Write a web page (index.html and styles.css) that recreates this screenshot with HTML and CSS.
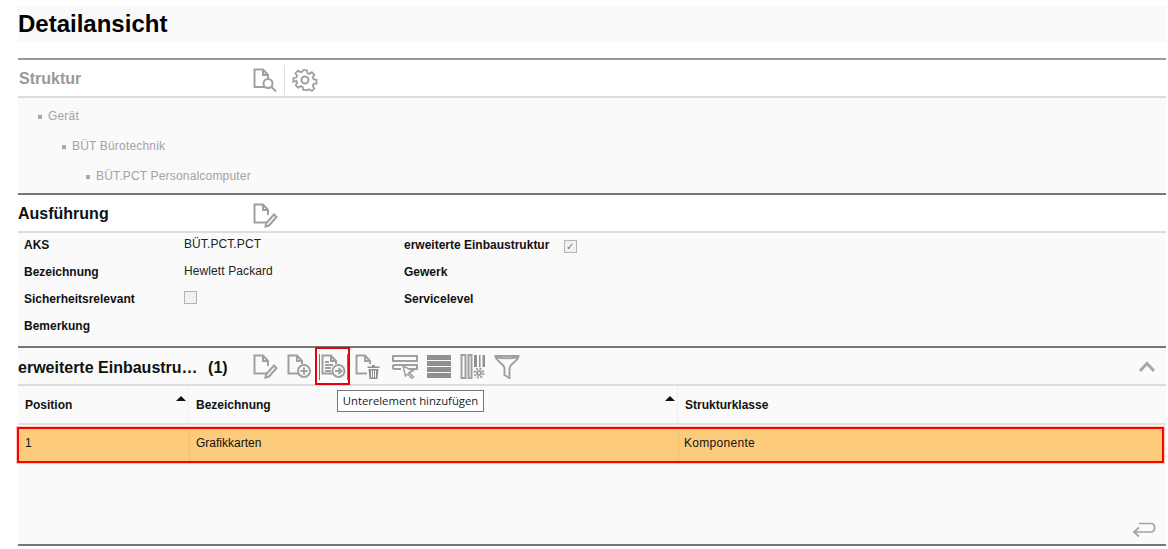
FILE: index.html
```html
<!DOCTYPE html>
<html lang="de">
<head>
<meta charset="utf-8">
<title>Detailansicht</title>
<link rel="stylesheet" href="styles.css">
</head>
<body>
<main class="page">
  <h1 class="title">Detailansicht</h1>

  <section class="panel first">
    <header class="head white">
      <h2 class="head-title muted">Struktur</h2>
      <div class="tools">
        <svg class="icon" viewBox="0 0 26 26"><path d="M13 20H2.500V2.500H11L16 8V11M11 2.500V8H16"/><circle cx="16" cy="16.500" r="4.500"/><path d="M19.500 20L24 24.500"/></svg>
        <span class="sep"></span>
        <svg class="icon gear" viewBox="0 0 26 26"><circle cx="13" cy="13" r="3.500"/><path d="M11 2h4l.7 3.300 2 .9 2.900-1.800 2.800 2.800-1.800 2.900.9 2 3.300.7v4l-3.300.7-.9 2 1.800 2.900-2.800 2.800-2.900-1.800-2 .9L15 24h-4l-.7-3.300-2-.9-2.900 1.800-2.800-2.800 1.800-2.900-.9-2L0 15v-4l3.300-.7.9-2-1.800-2.900 2.800-2.800 2.900 1.800 2-.9z" transform="translate(1.300 1.300) scale(.9)"/></svg>
      </div>
    </header>
    <ul class="tree">
      <li class="l1">Gerät</li>
      <li class="l2">BÜT Bürotechnik</li>
      <li class="l3">BÜT.PCT Personalcomputer</li>
    </ul>
  </section>

  <section class="panel dark">
    <header class="head white">
      <h2 class="head-title">Ausführung</h2>
      <div class="tools">
        <svg class="icon" viewBox="0 0 26 26"><path d="M15 20.500H2.500V2.500H11L16 8V13M11 2.500V8H16"/><path class="thick" d="M14 21.500L22 12.500 24.500 15 17 23.500 13.500 24.500z"/></svg>
      </div>
    </header>
    <div class="form">
      <b class="lbl">AKS</b><span class="val">BÜT.PCT.PCT</span><b class="lbl">erweiterte Einbaustruktur <span class="check on">✓</span></b>
      <b class="lbl">Bezeichnung</b><span class="val">Hewlett Packard</span><b class="lbl">Gewerk</b>
      <b class="lbl">Sicherheitsrelevant</b><span class="val"><span class="check"></span></span><b class="lbl">Servicelevel</b>
      <b class="lbl">Bemerkung</b><span></span><span></span>
    </div>
  </section>

  <section class="panel dark">
    <header class="head">
      <h2 class="head-title sub">erweiterte Einbaustru… <span class="count">(1)</span></h2>
      <div class="tools">
        <svg class="icon" viewBox="0 0 26 26"><path d="M15 20.500H2.500V2.500H11L16 8V13M11 2.500V8H16"/><path class="thick" d="M14 21.500L22 12.500 24.500 15 17 23.500 13.500 24.500z"/></svg>
        <svg class="icon" viewBox="0 0 26 26"><path d="M13 20.500H2.500V2.500H11L16 8V11M11 2.500V8H16"/><circle cx="18" cy="18" r="6"/><path d="M18 14.500V21.500M14.500 18H21.500"/></svg>
        <span class="active">
          <svg class="icon" viewBox="0 0 26 26"><path d="M13 20.500H2.500V2.500H11L16 8V11M11 2.500V8H16M5 9H9M5 12H13M5 15H11M5 18H11"/><circle cx="18.500" cy="18" r="6"/><path d="M15 18H21.500M18.500 15L21.500 18 18.500 21"/></svg>
        </span>
        <svg class="icon" viewBox="0 0 26 26"><path d="M13 20.500H2.500V2.500H11L16 8V11M11 2.500V8H16"/><path class="fill" d="M13.500 13.500H25.500V15H13.500zM18 12H21V13.500H18z"/><path class="fill" d="M14.500 16H24.500L23.500 26H15.500zM17 17.500V24.500H18V17.500zM19 17.500V24.500H20V17.500zM21 17.500V24.500H22V17.500z" fill-rule="evenodd"/></svg>
        <svg class="icon first-wide" viewBox="0 0 26 26"><path d="M1 3H25V8H1zM1 12H25V16H15"/><path d="M1 16V12"/><path d="M1 16H9"/><path class="blank" d="M11 13L21 18 17 19.500 21.500 24 19.500 25 16 21 13.500 23z"/></svg>
        <svg class="icon" viewBox="0 0 26 26"><path class="fill" d="M1 2H25V7H1zM1 8H25V13H1zM1 14H25V19H1zM1 20H25V25H1z"/></svg>
        <svg class="icon" viewBox="0 0 26 26"><path d="M1.500 2V25H5.500V2zM8.500 2V25H11.500V2z"/><path class="fill" d="M14 2H17V14H14zM19 2H20.500V14H19zM22.500 2H25V14H22.500z"/><circle cx="19" cy="20" r="2"/><circle class="teeth" cx="19" cy="20" r="4.500"/></svg>
        <svg class="icon" viewBox="0 0 26 26"><path d="M1.500 3H24.500C24.500 8 15.500 11 15.500 15V25L10.500 22V15C10.500 11 1.500 8 1.500 3zM1.500 3C1.500 6 24.500 6 24.500 3"/></svg>
      </div>
      <svg class="chevron" viewBox="0 0 18 12"><path d="M2 11L9 3.500 16 11"/></svg>
      <div class="tooltip">Unterelement hinzufügen</div>
    </header>
    <div class="table">
      <div class="thead">
        <b class="cell c1">Position<i class="sort"></i></b>
        <b class="cell c2">Bezeichnung<i class="sort"></i></b>
        <b class="cell c3">Strukturklasse</b>
      </div>
      <div class="row">
        <span class="cell c1">1</span>
        <span class="cell c2">Grafikkarten</span>
        <span class="cell c3">Komponente</span>
      </div>
      <div class="foot">
        <svg class="back" viewBox="0 0 24 18"><path d="M7 3.500H18.500C24 3.500 24 12 18.500 12H2M7 7.500L2 12 7 16.500"/></svg>
      </div>
    </div>
  </section>
</main>
</body>
</html>
```

FILE: styles.css
```css
* { box-sizing: border-box; }
html, body { margin: 0; padding: 0; height: 549px; overflow: hidden; background: #fff; }
body { font: 12px "Liberation Sans", Arial, sans-serif; color: #111; }
.page { margin-left: 18px; width: 1148px; padding-top: 6px; }
.title {
  margin: 0; height: 36px; padding-top: 3px; background: #f9f9f9;
  font-size: 24px; line-height: 30px; font-weight: bold; color: #000;
}
.panel { border-top: 2px solid #777; }
.panel.first { margin-top: 16px; border-top-color: #999; }
.head {
  position: relative; display: flex; align-items: center; height: 38px;
  border-bottom: 2px solid #ddd; background: #fafafa;
}
.head.white { background: #fff; }
.head.white .tools { padding-top: 3px; }
.head-title { margin: 0; width: 234px; padding-top: 2px; font-size: 16px; font-weight: bold; color: #111; white-space: nowrap; }
.head-title.muted { color: #999; padding-left: 1px; }
.head-title.sub { font-size: 16px; padding-top: 4px; }
.count { margin-left: 6px; }
.tools { display: flex; align-items: center; gap: 8px; height: 36px; }
.icon { width: 26px; height: 26px; flex: none; fill: none; stroke: #a0a0a0; stroke-width: 2; }
.icon .fill { fill: #8f8f8f; stroke: none; }
.icon .blank { fill: #fff; stroke-width: 1.500; }
.icon .teeth { stroke-width: 2; stroke-dasharray: 2 1.530; }
.first-wide { margin-left: 4px; }
.sep { width: 1px; height: 30px; background: #ddd; margin: 0 -1px 0 -2px; }
.active {
  display: flex; align-items: center; justify-content: center; width: 35px; height: 38px;
  margin: 0 -4px 0 -5px; border: 2px solid #e8000b;
  background: linear-gradient(#777, #777) 2px 5px / 1px 26px no-repeat, linear-gradient(#777, #777) 30px 5px / 1px 26px no-repeat;
}
.chevron {
  position: absolute; right: 10px; top: 12px; width: 18px; height: 12px;
  fill: none; stroke: #a8a8a8; stroke-width: 3;
}
.tooltip {
  position: absolute; left: 319px; top: 42px; z-index: 2; width: 147px; height: 22px;
  border: 1px solid #767676; background: #fff; color: #222;
  font: 11.300px/20px "Open Sans", "Noto Sans", sans-serif; text-align: center; white-space: nowrap;
}
.tree { margin: 0; padding: 3px 0 0; height: 95px; list-style: none; background: #fafafa; color: #a3a3a3; letter-spacing: .18px; }
.tree li { position: relative; height: 30px; line-height: 30px; }
.tree li::before {
  content: ""; position: absolute; top: 14px; width: 4px; height: 4px; background: #a8a8a8;
  margin-left: -10px;
}
.l1 { padding-left: 30px; }
.l2 { padding-left: 54px; }
.l3 { padding-left: 78px; }
.form {
  display: grid; grid-template-columns: 160px 220px 1fr; grid-auto-rows: 27px;
  height: 113px; padding: 0 6px; background: #fafafa; align-items: start; line-height: 24px;
}
.lbl { font-weight: bold; color: #111; }
.val { color: #222; position: relative; top: -1px; letter-spacing: .1px; }
.check {
  display: inline-block; width: 13px; height: 13px; margin-left: 11px; border: 1px solid #b5b5b5;
  background: #f1f1f1; color: #777; font: 10px/11px "DejaVu Sans", sans-serif; text-align: center; vertical-align: -1px;
}
.val .check { margin-left: 0; vertical-align: -2px; }
.table { background: #fafafa; height: 158px; }
.thead { display: flex; height: 39px; border-bottom: 2px solid #e2e2e2; }
.thead .cell { line-height: 38px; }
.cell { position: relative; display: block; padding-left: 7px; height: 100%; border-right: 1px solid #f0f0f0; }
.c1 { width: 171px; }
.c2 { width: 489px; }
.c3 { flex: 1; border-right: 0; }
.sort {
  position: absolute; right: 2px; top: 10px; width: 0; height: 0;
  border: 5px solid transparent; border-top: 0; border-bottom-color: #111;
}
.row {
  display: flex; height: 36px; margin: 2px 2px 0 -1px; background: #fdcc7a; line-height: 28px;
  border: 2px solid #f00; box-shadow: 0 0 0 1px #fbc9c0;
}
.row .cell { border-right-color: #f2c06e; padding-left: 6px; }
.row .c3 { padding-left: 5px; letter-spacing: .3px; }
.foot { position: relative; height: 81px; }
.back {
  position: absolute; right: 10px; bottom: 6px; width: 24px; height: 18px;
  fill: none; stroke: #a3a3a3; stroke-width: 1.700;
}
section:last-child { border-bottom: 2px solid #777; }
```
